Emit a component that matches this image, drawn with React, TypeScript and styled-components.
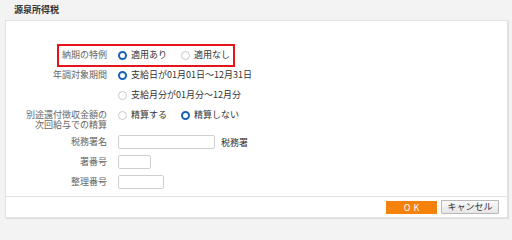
import React from 'react';
import styled, {createGlobalStyle} from 'styled-components';

const GlobalStyle = createGlobalStyle`
  html, body {
    margin: 0;
    padding: 0;
    background: #f3f3f3;
  }
  body {
    font-family: "Noto Sans CJK JP", "Noto Sans", sans-serif;
    font-size: 9px;
    color: #333;
  }
`;

const Page = styled.div`
  width: 512px;
  height: 223px;
  display: flex;
  flex-direction: column;
`;

const Title = styled.div`
  height: 20px;
  line-height: 20px;
  padding-left: 14px;
  font-weight: bold;
  font-size: 9px;
  color: #333;
`;

const Panel = styled.div`
  margin-left: 5px;
  width: 503px;
  height: 198px;
  background: white;
  border: 1px solid #e2e2e2;
  box-shadow: 1px 1px 1px rgba(0, 0, 0, 0.08);
  box-sizing: border-box;
  display: flex;
  flex-direction: column;
`;

const Body = styled.div`
  flex: 1;
  padding-top: 24px;
  display: flex;
  flex-direction: column;
`;

const Row = styled.div<{$h?: number; $top?: boolean}>`
  display: flex;
  align-items: ${p => (p.$top ? 'flex-start' : 'center')};
  height: ${p => p.$h ?? 20}px;
  padding-top: ${p => (p.$top ? 5 : 0)}px;
  box-sizing: border-box;
`;

// red frame round the first row's label and options
const Highlight = styled.div`
  display: flex;
  align-items: center;
  margin-left: 51px;
  width: 178px;
  height: 23px;
  flex: none;
  border: 2px solid #e8141c;
  box-sizing: border-box;
`;

const Label = styled.div<{$w?: number}>`
  width: ${p => p.$w ?? 101}px;
  flex: none;
  text-align: right;
  color: #666;
  line-height: 10px;
  margin-right: 11px;
  white-space: nowrap;
`;

const Options = styled.div`
  display: flex;
  align-items: center;
  gap: 14px;
`;

const Option = styled.label`
  display: flex;
  align-items: center;
  gap: 4px;
  color: #333;
  line-height: 10px;
  white-space: nowrap;
`;

const Circle = styled.span<{$on?: boolean}>`
  width: 9px;
  height: 9px;
  box-sizing: border-box;
  border-radius: 50%;
  border: ${p => (p.$on ? '2.5px solid #1a62b5' : '1px solid #c8c8c8')};
  background: white;
  flex: none;
`;

const Input = styled.div<{$w: number}>`
  width: ${p => p.$w}px;
  height: 14px;
  border: 1px solid #cfcfcf;
  border-radius: 2px;
  box-sizing: border-box;
  background: white;
`;

const Suffix = styled.span`
  margin-left: 6px;
  color: #333;
`;

const Footer = styled.div`
  height: 20px;
  border-top: 1px solid #e2e2e2;
  display: flex;
  justify-content: flex-end;
  align-items: center;
  gap: 4px;
  padding-right: 8px;
`;

const OkButton = styled.button`
  width: 51px;
  height: 13px;
  border: none;
  background: #f5820d;
  color: white;
  font-family: inherit;
  font-size: 9px;
  letter-spacing: 3px;
  padding: 0 0 0 3px;
  line-height: 13px;
`;

const CancelButton = styled.button`
  width: 58px;
  height: 14px;
  border: 1px solid #b8b8b8;
  border-radius: 1px;
  background: linear-gradient(#fafafa, #e6e6e6);
  color: #333;
  font-family: inherit;
  font-size: 9px;
  padding: 0;
  line-height: 12px;
`;

function Radio({label, on}: {label: string; on?: boolean}) {
  return (
    <Option>
      <Circle $on={on}/>
      <span>{label}</span>
    </Option>
  );
}

export default function App() {
  return (
    <Page>
      <GlobalStyle/>
      <Title>源泉所得税</Title>
      <Panel>
        <Body>
          <Row>
            <Highlight>
              <Label $w={48}>納期の特例</Label>
              <Options>
                <Radio label="適用あり" on/>
                <Radio label="適用なし"/>
              </Options>
            </Highlight>
          </Row>
          <Row>
            <Label>年調対象期間</Label>
            <Radio label="支給日が01月01日～12月31日" on/>
          </Row>
          <Row>
            <Label/>
            <Radio label="支給月分が01月分～12月分"/>
          </Row>
          <Row $h={27} $top>
            <Label>別途還付徴収金額の<br/>次回給与での精算</Label>
            <Options>
              <Radio label="精算する"/>
              <Radio label="精算しない" on/>
            </Options>
          </Row>
          <Row>
            <Label>税務署名</Label>
            <Input $w={97}/>
            <Suffix>税務署</Suffix>
          </Row>
          <Row>
            <Label>署番号</Label>
            <Input $w={33}/>
          </Row>
          <Row>
            <Label>整理番号</Label>
            <Input $w={46}/>
          </Row>
        </Body>
        <Footer>
          <OkButton>OK</OkButton>
          <CancelButton>キャンセル</CancelButton>
        </Footer>
      </Panel>
    </Page>
  );
}
